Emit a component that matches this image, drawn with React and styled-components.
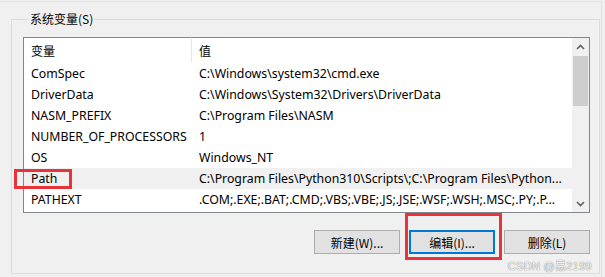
import styled, { createGlobalStyle } from 'styled-components'

const GlobalStyle = createGlobalStyle`
  html, body {
    margin: 0;
    padding: 0;
    background: #f0f0f0;
  }
  body {
    font-family: "Noto Sans", "Noto Sans CJK SC", sans-serif;
    color: #000;
  }
`

const vars = [
  { name: 'ComSpec', value: 'C:\\Windows\\system32\\cmd.exe' },
  { name: 'DriverData', value: 'C:\\Windows\\System32\\Drivers\\DriverData' },
  { name: 'NASM_PREFIX', value: 'C:\\Program Files\\NASM' },
  { name: 'NUMBER_OF_PROCESSORS', value: '1' },
  { name: 'OS', value: 'Windows_NT' },
  { name: 'Path', value: 'C:\\Program Files\\Python310\\Scripts\\;C:\\Program Files\\Python...', selected: true, marked: true },
  { name: 'PATHEXT', value: '.COM;.EXE;.BAT;.CMD;.VBS;.VBE;.JS;.JSE;.WSF;.WSH;.MSC;.PY;.P...' },
]

export default function App() {
  return (
    <>
      <GlobalStyle />
      <Frame>
        <Group>
          <Legend>系统变量(S)</Legend>
          <ListBox>
            <ListMain>
              <HeaderRow>
                <HeadCell divider>变量</HeadCell>
                <HeadCell>值</HeadCell>
              </HeaderRow>
              {vars.map((v) => (
                <Row key={v.name} selected={v.selected}>
                  <NameCell>
                    {v.name}
                    {v.marked && <Mark />}
                  </NameCell>
                  <ValueCell>{v.value}</ValueCell>
                </Row>
              ))}
            </ListMain>
            <ScrollBar>
              <Arrow>
                <svg width="9" height="6" viewBox="0 0 9 6">
                  <polyline points="1,5 4.5,1.5 8,5" fill="none" stroke="#606060" strokeWidth="1.6" />
                </svg>
              </Arrow>
              <Track>
                <Thumb />
              </Track>
              <Arrow>
                <svg width="9" height="6" viewBox="0 0 9 6">
                  <polyline points="1,1 4.5,4.5 8,1" fill="none" stroke="#606060" strokeWidth="1.6" />
                </svg>
              </Arrow>
            </ScrollBar>
          </ListBox>
          <Buttons>
            <Button>新建(W)...</Button>
            <Button primary>
              编辑(I)...
              <Mark wide />
            </Button>
            <Button>删除(L)</Button>
          </Buttons>
        </Group>
        <Watermark>CSDN @易2199</Watermark>
      </Frame>
    </>
  )
}

const Frame = styled.div`
  position: relative;
  width: 602px;
  height: 276px;
  margin-top: 1px;
  border-top: 1px solid #e2e2e2;
  border-right: 1px solid #e2e2e2;
  box-sizing: border-box;
  padding-top: 9px;
`

const Group = styled.fieldset`
  margin: 0 0 0 11px;
  width: 589px;
  height: 263px;
  box-sizing: border-box;
  border: 1px solid #dcdcdc;
  padding: 2px 9px 0 11px;
  display: flex;
  flex-direction: column;
`

const Legend = styled.legend`
  font-family: "Noto Sans CJK SC", sans-serif;
  font-size: 12px;
  line-height: 16px;
  padding: 0 1px;
  margin-left: 6px;
  color: #000;
`

const ListBox = styled.div`
  width: 567px;
  height: 176px;
  box-sizing: border-box;
  border: 1px solid #828790;
  background: #fff;
  display: flex;
  margin-top: 8px;
`

const ListMain = styled.div`
  flex: 1;
  min-width: 0;
  display: flex;
  flex-direction: column;
`

const HeaderRow = styled.div`
  display: grid;
  grid-template-columns: 168px 1fr;
  height: 25px;
  align-items: center;
  font-family: "Noto Sans CJK SC", sans-serif;
  font-size: 12px;
`

const HeadCell = styled.div`
  height: 23px;
  display: flex;
  align-items: center;
  padding-left: 7px;
  border-right: ${(p) => (p.divider ? '1px solid #e5e5e5' : 'none')};
`

const Row = styled.div`
  display: grid;
  grid-template-columns: 175px 1fr;
  height: 21px;
  font-size: 12.3px;
  background: ${(p) => (p.selected ? '#f0f0f0' : '#fff')};
  white-space: nowrap;
`

const NameCell = styled.div`
  position: relative;
  display: flex;
  align-items: center;
  padding-left: 7px;
`

const ValueCell = styled.div`
  display: flex;
  align-items: center;
  overflow: hidden;
`

const Mark = styled.span`
  position: absolute;
  box-sizing: border-box;
  border: 3px solid #ea3339;
  pointer-events: none;
  ${(p) =>
    p.wide
      ? `left: -6px; top: -19px; right: -9px; bottom: -8px;`
      : `left: -10px; top: 1px; width: 58px; height: 20px;`}
`

const ScrollBar = styled.div`
  width: 17px;
  display: flex;
  flex-direction: column;
  background: #f0f0f0;
`

const Arrow = styled.div`
  height: 17px;
  display: flex;
  align-items: center;
  justify-content: center;
`

const Track = styled.div`
  flex: 1;
  padding: 1px 1px 0;
`

const Thumb = styled.div`
  height: 50px;
  background: #cdcdcd;
`

const Buttons = styled.div`
  display: flex;
  justify-content: flex-end;
  gap: 9px;
  margin-top: 17px;
`

const Button = styled.div`
  position: relative;
  width: 86px;
  height: 24px;
  box-sizing: border-box;
  background: #e1e1e1;
  border: ${(p) => (p.primary ? '2px solid #0078d7' : '1px solid #adadad')};
  display: flex;
  align-items: center;
  justify-content: center;
  font-family: "Noto Sans CJK SC", sans-serif;
  font-size: 12px;
`

const Watermark = styled.div`
  position: absolute;
  right: 9px;
  bottom: 4px;
  font-family: "Liberation Sans", "Noto Sans CJK SC", sans-serif;
  font-size: 11px;
  letter-spacing: 0.3px;
  color: #f6f6f6;
  text-shadow: 0 0 1px #8a8a8a, 0 0 1px #8a8a8a;
`
